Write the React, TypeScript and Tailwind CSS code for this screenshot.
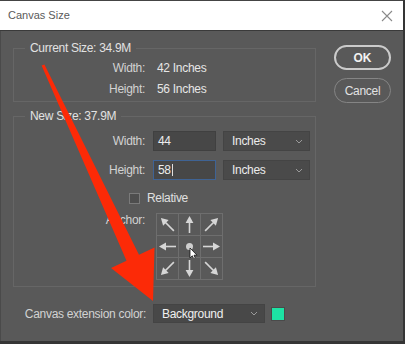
import React from "react";

function Chevron() {
  return (
    <svg width="8" height="5" viewBox="0 0 8 5" className="shrink-0">
      <path d="M1 1 L4 4 L7 1" fill="none" stroke="#9a9a9a" strokeWidth="1" />
    </svg>
  );
}

function Select({ label, width }: { label: string; width: string }) {
  return (
    <div
      className={`${width} h-[20px] flex items-center justify-between pl-[8px] pr-[6px] bg-[#4a4a4a] border border-[#444] text-[#ececec]`}
    >
      <span>{label}</span>
      <Chevron />
    </div>
  );
}

const angles = [315, 0, 45, 270, -1, 90, 225, 180, 135];

function Arrow({ angle }: { angle: number }) {
  if (angle < 0) {
    return (
      <svg width="21" height="21" viewBox="0 0 21 21" className="overflow-visible">
        <circle cx="10.5" cy="10.5" r="3.5" fill="#cfcfcf" />
        <path
          d="M11 12 L11 22 L13.3 19.8 L15 23.5 L16.6 22.8 L15 19.2 L18 19.2 Z"
          fill="#ffffff"
          stroke="#111"
          strokeWidth="0.8"
        />
      </svg>
    );
  }
  const diag = angle % 90 !== 0;
  const top = diag ? 1.2 : 2;
  const bottom = diag ? 19.5 : 19;
  return (
    <svg width="21" height="21" viewBox="0 0 21 21" className="overflow-visible">
      <g transform={`rotate(${angle} 10.5 10.5)`}>
        <line x1="10.5" y1={bottom} x2="10.5" y2={top + 4} stroke="#d6d6d6" strokeWidth="1.6" />
        <polygon points={`10.5,${top} 6.6,${top + 7} 14.4,${top + 7}`} fill="#d6d6d6" />
      </g>
    </svg>
  );
}

export default function App() {
  return (
    <div className="relative w-[405px] h-[344px] overflow-hidden bg-[#353535] text-[12px] tracking-[-0.3px] font-['Liberation_Sans',Arial,sans-serif]">
      <div className="w-[403px] h-[341px] flex flex-col">
        <div className="h-[31px] shrink-0 bg-white border-t border-b border-t-[#444] border-b-[#3a3a3a] flex items-center justify-between pl-[8px] pr-[10px]">
          <span className="text-[11px] tracking-normal text-[#5a5a5a]">Canvas Size</span>
          <svg width="12" height="12" viewBox="0 0 12 12">
            <path d="M1 1 L11 11 M11 1 L1 11" stroke="#8a8a8a" strokeWidth="1.1" />
          </svg>
        </div>

        <div className="flex-1 bg-[#595959] flex px-[12px] border-l border-[#4a4a4a]">
          <div className="w-[306px] mt-[10px]">
            <fieldset className="border border-[#666] pb-[2px]">
              <legend className="ml-[11px] px-[5px] leading-[14px] text-[#e2e2e2]">Current Size: 34.9M</legend>
              <div className="pt-[2px]">
                <div className="h-[21px] flex items-center">
                  <span className="w-[131px] text-right text-[#d2d2d2]">Width:</span>
                  <span className="ml-[12px] text-[#e6e6e6]">42 Inches</span>
                </div>
                <div className="h-[21px] flex items-center">
                  <span className="w-[131px] text-right text-[#d2d2d2]">Height:</span>
                  <span className="ml-[12px] text-[#e6e6e6]">56 Inches</span>
                </div>
              </div>
            </fieldset>

            <fieldset className="mt-[7px] border border-[#666] pb-[6px]">
              <legend className="ml-[11px] px-[5px] leading-[14px] text-[#e2e2e2]">New Size: 37.9M</legend>
              <div className="mt-[8px] h-[20px] flex items-center">
                <span className="w-[131px] text-right text-[#d2d2d2]">Width:</span>
                <div className="ml-[8px] w-[63px] h-[20px] flex items-center pl-[4px] bg-[#474747] border border-[#404040] text-[#ececec]">
                  44
                </div>
                <div className="ml-[7px]">
                  <Select label="Inches" width="w-[87px]" />
                </div>
              </div>
              <div className="mt-[9px] h-[20px] flex items-center">
                <span className="w-[131px] text-right text-[#d2d2d2]">Height:</span>
                <div className="ml-[8px] w-[63px] h-[20px] flex items-center pl-[4px] bg-[#474747] border border-[#3f6394] text-[#ececec]">
                  58<span className="ml-[1px] w-px h-[12px] bg-[#e0e0e0]" />
                </div>
                <div className="ml-[7px]">
                  <Select label="Inches" width="w-[87px]" />
                </div>
              </div>
              <div className="mt-[12px] h-[12px] flex items-center">
                <span className="ml-[115px] w-[11px] h-[11px] bg-[#4e4e4e] border border-[#7a7a7a]" />
                <span className="ml-[7px] text-[#e0e0e0]">Relative</span>
              </div>
              <div className="mt-[9px] flex items-start">
                <span className="w-[131px] text-right leading-[14px] text-[#d2d2d2]">Anchor:</span>
                <div className="ml-[11px] grid grid-cols-3 gap-px p-px bg-[#6e6e6e] w-[67px] h-[67px]">
                  {angles.map((a, i) => (
                    <div key={i} className="bg-[#595959] flex items-center justify-center">
                      <Arrow angle={a} />
                    </div>
                  ))}
                </div>
              </div>
            </fieldset>

            <div className="mt-[17px] h-[19px] flex items-center">
              <span className="w-[133px] text-right text-[#d2d2d2]">Canvas extension color:</span>
              <div className="ml-[7px] w-[112px] h-[19px] flex items-center justify-between pl-[8px] pr-[6px] bg-[#484848] border border-[#444] text-[#f0f0f0]">
                <span>Background</span>
                <Chevron />
              </div>
              <span className="ml-[6px] w-[14px] h-[14px] bg-[#1de3a4] border border-[#4a4a4a]" />
            </div>
          </div>

          <div className="ml-[18px] mt-[14px] flex flex-col gap-[8px]">
            <div className="w-[57px] h-[25px] rounded-full border-2 border-[#cbcbcb] flex items-center justify-center text-[#f2f2f2] font-bold tracking-normal">
              OK
            </div>
            <div className="w-[57px] h-[25px] rounded-full border-[1.5px] border-[#858585] flex items-center justify-center text-[#e2e2e2]">
              Cancel
            </div>
          </div>
        </div>
      </div>

      <svg className="absolute inset-0 pointer-events-none" width="405" height="344" viewBox="0 0 405 344">
        <polygon
          points="41.6,65.6 44.4,64.4 139,254.8 154.5,247.6 153,301 111,268 126.5,260.8"
          fill="#fc2a07"
        />
      </svg>
    </div>
  );
}
